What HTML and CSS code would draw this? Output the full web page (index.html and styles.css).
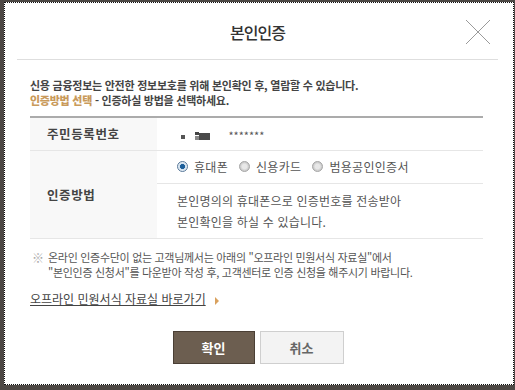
FILE: index.html
```html
<!DOCTYPE html>
<html lang="ko">
<head>
  <meta charset="UTF-8" />
  <title>본인인증</title>
  <link rel="stylesheet" href="styles.css">
</head>
<body>
  <div class="frame">
    <div class="dialog-head">
      <span></span>
      <h2>본인인증</h2>
      <button type="button" class="close" aria-label="닫기">
        <svg width="26" height="26" viewBox="0 0 26 26"><path d="M1 1L25 25M25 1L1 25" stroke="#9a9a9a" stroke-width="1" fill="none"/></svg>
      </button>
    </div>

    <div class="dialog-body">
      <p class="intro">신용 금융정보는 안전한 정보보호를 위해 본인확인 후, 열람할 수 있습니다.<br>
        <strong>인증방법 선택</strong> - 인증하실 방법을 선택하세요.</p>

      <table class="auth">
        <tr>
          <th>주민등록번호</th>
          <td>
            <span class="masked">
              <svg width="30" height="10" viewBox="0 0 30 10">
                <rect x="0" y="5" width="4" height="4" fill="#555"/>
                <rect x="14" y="2" width="4" height="3" fill="#444"/>
                <rect x="18" y="3" width="11" height="7" fill="#4a4a4a"/>
                <rect x="14" y="6" width="4" height="4" fill="#888"/>
              </svg>
            </span>
            <span class="stars">*******</span>
          </td>
        </tr>
        <tr>
          <th rowspan="2">인증방법</th>
          <td>
            <div class="radios">
              <label><span class="radio on"></span>휴대폰</label>
              <label><span class="radio"></span>신용카드</label>
              <label><span class="radio"></span>범용공인인증서</label>
            </div>
          </td>
        </tr>
        <tr>
          <td class="desc">본인명의의 휴대폰으로 인증번호를 전송받아<br>본인확인을 하실 수 있습니다.</td>
        </tr>
      </table>

      <div class="notice">
        <span class="mark">※</span>
        <p>온라인 인증수단이 없는 고객님께서는 아래의 "오프라인 민원서식 자료실"에서<br>
          "본인인증 신청서"를 다운받아 작성 후, 고객센터로 인증 신청을 해주시기 바랍니다.</p>
      </div>

      <a class="more" href="#">오프라인 민원서식 자료실 바로가기</a><span class="arrow"></span>

      <div class="buttons">
        <button type="button" class="btn ok">확인</button>
        <button type="button" class="btn cancel">취소</button>
      </div>
    </div>
  </div>
</body>
</html>
```

FILE: styles.css
```css
* {
  box-sizing: border-box;
}

html, body {
  height: 100%;
}

body {
  margin: 0;
  background-color: #4d4845;
  font-family: 'Noto Sans CJK KR', 'Noto Sans', sans-serif;
  color: #444;
  padding: 2px 1px 5px 4px;
}

.frame {
  height: 100%;
  background-color: #fff;
  border: 1px dotted #111;
}

.dialog-head {
  display: grid;
  grid-template-columns: 1fr auto 1fr;
  align-items: center;
  height: 57px;
  margin: 0 15px 0 12px;
  border-bottom: 1px solid #dedede;
}

.dialog-head h2 {
  margin: 0;
  font-size: 16px;
  font-weight: 500;
  letter-spacing: -1px;
  color: #333;
  padding-top: 2px;
}

.close {
  justify-self: end;
  margin-right: 7px;
  padding: 0;
  border: none;
  background: none;
  width: 26px;
  height: 26px;
  margin-top: 2px;
}

.close svg {
  display: block;
}

.dialog-body {
  padding: 0 30px 0 25px;
}

.intro {
  margin: 18px 0 8px;
  font-size: 11px;
  line-height: 15px;
  font-weight: 700;
  letter-spacing: -0.25px;
  color: #444;
}

.intro strong {
  color: #c99a5b;
}

.auth {
  width: 100%;
  border-collapse: collapse;
  border-top: 2px solid #ababab;
  font-size: 12px;
}

.auth th {
  width: 127px;
  background-color: #f8f8f8;
  text-align: left;
  padding: 0 0 0 17px;
  font-size: 12.5px;
  font-weight: 700;
  letter-spacing: 0.6px;
  color: #444;
  border-bottom: 1px solid #e6e6e6;
}

.auth td {
  height: 33px;
  padding: 0 0 0 20px;
  border-bottom: 1px solid #e6e6e6;
  color: #555;
}

.auth td.desc {
  height: 55px;
  line-height: 21px;
  padding-top: 0;
}

.masked {
  display: inline-block;
  vertical-align: middle;
  margin: 0 14px 0 4px;
}

.masked svg {
  display: block;
}

.stars {
  font-size: 11px;
  color: #555;
  vertical-align: middle;
}

.radios {
  display: flex;
  gap: 11px;
}

.radios label {
  display: flex;
  align-items: center;
  gap: 6px;
  color: #555;
  letter-spacing: 0.3px;
}

.radio {
  width: 11px;
  height: 11px;
  border-radius: 50%;
  border: 1px solid #a8a8a8;
  background: radial-gradient(circle, #e8e8e8 0 35%, #c8c8c8 70%);
}

.radio.on {
  border-color: #5a7a9a;
  background: radial-gradient(circle, #1d5f9a 0 35%, #cfe0ee 45%, #eef3f8 80%);
}

.auth td.desc {
  letter-spacing: 0.2px;
}

.notice {
  display: flex;
  gap: 4px;
  margin-top: 11px;
  font-size: 11px;
  line-height: 15px;
  color: #555;
}

.notice p {
  margin: 0;
  letter-spacing: -0.3px;
}

.notice .mark {
  color: #aaa;
  font-size: 12px;
  margin-left: 2px;
}

.more {
  display: inline-block;
  margin-top: 10px;
  font-size: 12px;
  color: #444;
  text-decoration: underline;
  letter-spacing: 0;
}

.arrow {
  display: inline-block;
  margin-left: 9px;
  width: 0;
  height: 0;
  border-left: 4px solid #d9a15e;
  border-top: 4px solid transparent;
  border-bottom: 4px solid transparent;
  vertical-align: -1px;
}

.buttons {
  display: flex;
  justify-content: center;
  gap: 5px;
  margin-top: 22px;
  padding-left: 3px;
}

.btn {
  width: 82px;
  height: 33px;
  font-family: inherit;
  font-size: 13px;
  font-weight: 700;
  cursor: pointer;
}

.btn.ok {
  background-color: #6c5e50;
  border: 1px solid #4a3f35;
  color: #fff;
}

.btn.cancel {
  width: 84px;
  background-color: #f3f3f3;
  border: 1px solid #cfcfcf;
  color: #666;
}
```
